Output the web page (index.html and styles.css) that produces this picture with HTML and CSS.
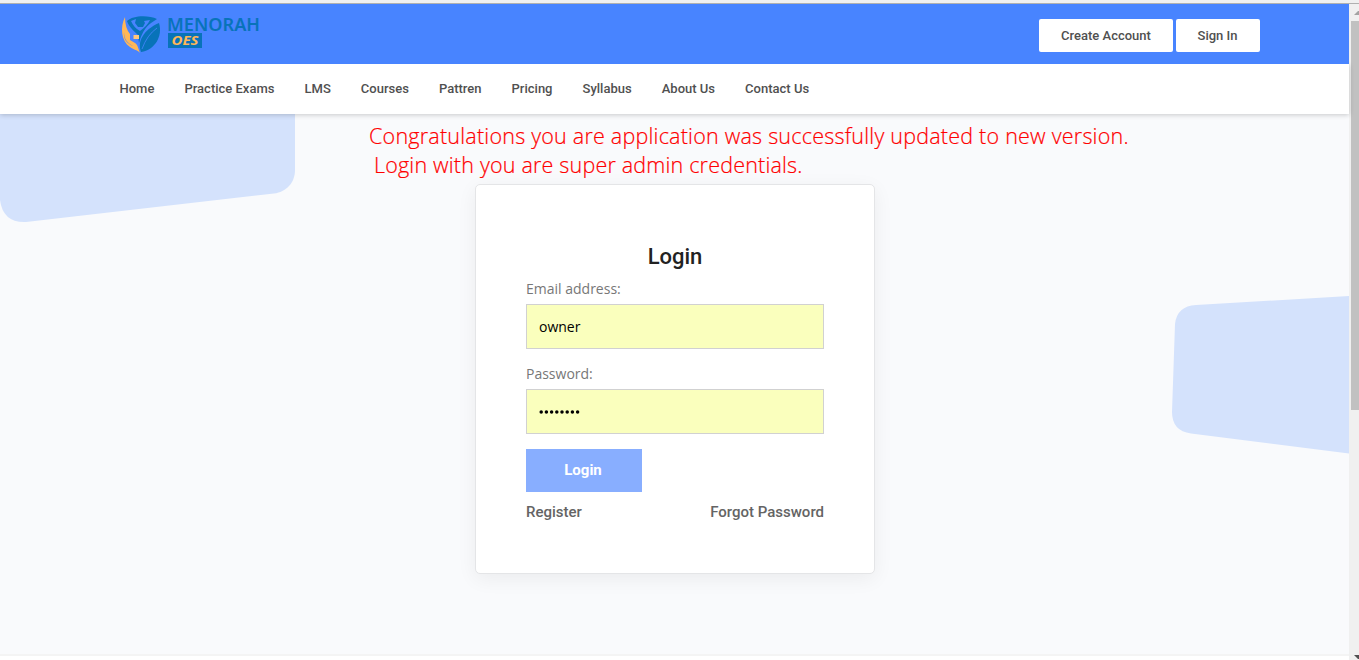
FILE: index.html
```html
<!DOCTYPE html>
<html lang="en">
<head>
<meta charset="utf-8">
<title>Menorah OES - Login</title>
<link rel="stylesheet" href="styles.css">
</head>
<body>
<div class="chrome-edge"></div>
<div class="window">
  <div class="page">
    <header class="topbar">
      <svg class="logo" width="142" height="42" viewBox="0 0 142 42">
        <path fill="#0873b9" d="M7 7C13 1 29 1 37 5L31 9C25 13 21 21 19 29L18 21C14 17 9 13 7 7Z"/>
        <path fill="#4884ff" d="M11 7L16 5L15 9L18 13H23L25 9L24 7L30 6Q27 12 20 17Q14 14 11 7Z"/>
        <path fill="#0873b9" d="M16 5H23L24 9Q20 14 16 9Z"/>
        <path fill="#0873b9" d="M39 9C43 22 35 36 21 38C17 28 23 16 39 9Z"/>
        <path fill="none" stroke="#4884ff" stroke-width=".8" d="M22 35Q27 21 37 14"/>
        <path fill="#ffb757" d="M5 3C0 13 1 27 10 33C14 36 18 36 20 39C18 34 18 31 15 29L10 26V20Q5 14 5 3Z"/>
        <path fill="#4884ff" d="M4 18C4 25 7 29 13 32C8 30 3 26 4 18Z"/>
        <path fill="#ffc77c" d="M13.500 21H19V25H13.500Z"/>
        <text class="brand" x="47" y="16.500" textLength="93" lengthAdjust="spacingAndGlyphs">MENORAH</text>
        <rect x="48" y="19" width="34" height="15" fill="#0873b9"/>
        <text class="brand-tag" x="51.500" y="31.400" textLength="27" lengthAdjust="spacingAndGlyphs">OES</text>
      </svg>
      <div class="account"><a class="btn create">Create Account</a><a class="btn signin">Sign In</a></div>
    </header>
    <nav class="menu">
      <a>Home</a><a>Practice Exams</a><a>LMS</a><a>Courses</a><a>Pattren</a><a>Pricing</a><a>Syllabus</a><a>About Us</a><a>Contact Us</a>
    </nav>
    <main class="content">
      <svg class="shapes" width="1349" height="540" viewBox="0 0 1349 540">
        <path fill="#d4e2fc" d="M0 0H295V56C295 69 286 78 274 79.500L26 108Q3 109 0 86Z"/>
        <path fill="#d4e2fc" d="M1349 182L1196 191Q1177 192 1175 210L1172 298Q1172 317 1191 319.500L1349 339.500Z"/>
      </svg>
      <div class="notice">
        <p class="line first">Congratulations you are application was successfully updated to new version.</p>
        <p class="line second">Login with you are super admin credentials.</p>
      </div>
      <form class="card">
        <h1 class="title">Login</h1>
        <label class="label" for="email">Email address:</label>
        <input class="field" id="email" type="text" value="owner">
        <label class="label" for="password">Password:</label>
        <div class="field dots" id="password">
          <svg width="42" height="4"><path d="M2.200 2H39" fill="none" stroke="#000" stroke-width="3.500" stroke-linecap="round" stroke-dasharray="0 5.200"/></svg>
        </div>
        <button class="submit" type="button">Login</button>
        <div class="links"><a>Register</a><a>Forgot Password</a></div>
      </form>
    </main>
    <div class="footer-edge"></div>
  </div>
  <div class="scrollbar">
    <svg class="arrow" width="10" height="17"><path fill="#a3a3a3" d="M5 11L9 7H10V11Z"/></svg>
    <div class="thumb"></div>
    <svg class="arrow down" width="10" height="8"><path fill="#505050" d="M5 3H10V7H9Z"/></svg>
  </div>
</div>
</body>
</html>
```

FILE: styles.css
```css
* { box-sizing: border-box; }
body { margin: 0; height: 660px; overflow: hidden; font-family: Roboto, sans-serif; background: #fff; }
.chrome-edge { height: 4px; background: #f0f0f0; border-bottom: 1px solid #b0b0b0; }
.window { display: flex; height: 656px; }
.page { width: 1349px; display: flex; flex-direction: column; }
.topbar { position: relative; z-index: 2; height: 60px; background: #4884ff; display: flex; justify-content: space-between; align-items: flex-start; padding: 10px 89px 0 120px; }
.logo { display: block; overflow: visible; }
.brand { font: 600 17px "Noto Sans", sans-serif; fill: #0873b9; }
.brand-tag { font: italic 700 13px "Noto Sans", sans-serif; fill: #ffb757; }
.account { display: flex; gap: 3px; padding-top: 5px; }
.btn { height: 33px; line-height: 33px; text-align: center; background: #fff; border-radius: 2px; color: #505050; font-size: 13px; font-weight: 500; }
.create { width: 134px; }
.signin { width: 84px; padding-right: 1px; }
.menu { height: 50px; padding: 0 0 2px 119.500px; display: flex; gap: 30.070px; align-items: center; background: #fff; color: #505050; font-size: 13px; font-weight: 500; position: relative; z-index: 1; box-shadow: 0 1px 5px rgba(0,0,0,.2); }
.content { height: 540px; background: #f9fafc; position: relative; }
.shapes { position: absolute; left: 0; top: 0; }
.notice { position: relative; height: 70px; padding: 7px 0 0 369px; }
.line { margin: 0; height: 29px; line-height: 29px; white-space: nowrap; color: #f00; font-family: "Open Sans", sans-serif; font-weight: 300; font-size: 21.500px; -webkit-text-stroke: .2px #f00; }
.first { letter-spacing: .22px; }
.second { padding-left: 5px; letter-spacing: .19px; }
.card { position: relative; width: 400px; height: 390px; margin-left: 475px; padding: 58px 50px 0; background: #fff; border: 1px solid #e4e5e7; border-radius: 5px; box-shadow: 0 5px 20px rgba(0,0,0,.06); }
.title { margin: 0; height: 28px; line-height: 28px; text-align: center; font-size: 22px; font-weight: 500; color: #222; }
.label { display: block; height: 33px; padding-top: 6px; line-height: 24px; font-family: "Open Sans", sans-serif; font-size: 14px; color: #777; }
.field { display: block; width: 298px; height: 45px; margin: 0 0 7px; padding: 0 12px; border: 1px solid #d1d1d1; border-radius: 0; background: #faffbd; color: #000; font: 14px "Open Sans", sans-serif; outline: none; }
.dots { display: flex; align-items: center; margin-bottom: 15px; }
.submit { display: block; width: 116px; height: 43px; padding: 0 2px 2px 0; border: 0; background: #88aeff; color: #fff; font: 700 15px Roboto, sans-serif; }
.links { display: flex; justify-content: space-between; margin-top: 9px; line-height: 22px; font-size: 15px; font-weight: 500; color: #646464; }
.footer-edge { height: 2px; background: #f4f4f4; }
.scrollbar { width: 10px; background: #f0f0f0; display: flex; flex-direction: column; }
.arrow { display: block; }
.thumb { width: 8px; height: 389px; margin-left: 2px; background: #c1c1c1; }
.down { margin-top: auto; }
```
